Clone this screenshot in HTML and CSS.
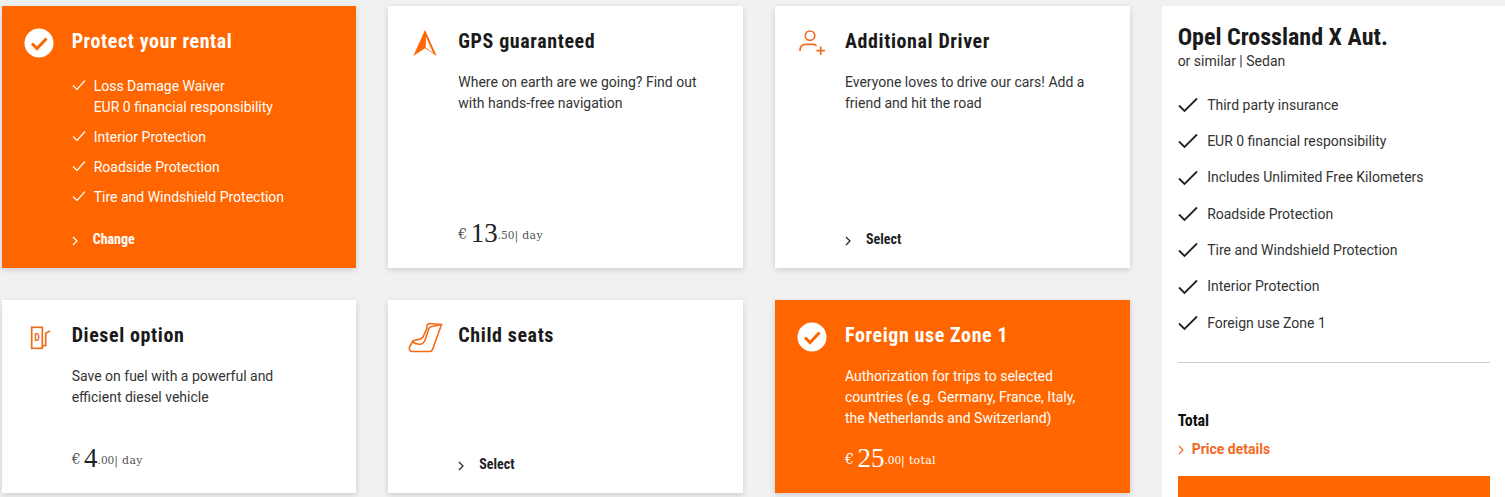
FILE: index.html
```html
<!DOCTYPE html>
<html lang="en">

<head>
    <meta charset="UTF-8">
    <meta name="viewport" content="width=device-width, initial-scale=1.0">
    <title>Extras</title>
    <link rel="stylesheet" href="styles.css">
</head>

<body>
    <div class="page">
        <!-- Protection -->
        <div class="card card-active">
            <div class="card-icon">
                <svg viewBox="0 0 40 40" width="40" height="40"><circle cx="20" cy="20" r="14.5" fill="#fff"/><path d="M13 20.5l5 5 9.5-10" fill="none" stroke="#f60" stroke-width="3"/></svg>
            </div>
            <div class="card-body">
                <h3>Protect your rental</h3>
                <ul class="card-list">
                    <li><svg class="tick" viewBox="0 0 14 12" width="14" height="12"><path d="M1 6.5l4 4L13 1.500" fill="none" stroke="#fff" stroke-width="1.200"/></svg><span>Loss Damage Waiver<br>EUR 0 financial responsibility</span></li>
                    <li><svg class="tick" viewBox="0 0 14 12" width="14" height="12"><path d="M1 6.5l4 4L13 1.500" fill="none" stroke="#fff" stroke-width="1.200"/></svg><span>Interior Protection</span></li>
                    <li><svg class="tick" viewBox="0 0 14 12" width="14" height="12"><path d="M1 6.5l4 4L13 1.500" fill="none" stroke="#fff" stroke-width="1.200"/></svg><span>Roadside Protection</span></li>
                    <li><svg class="tick" viewBox="0 0 14 12" width="14" height="12"><path d="M1 6.5l4 4L13 1.500" fill="none" stroke="#fff" stroke-width="1.200"/></svg><span>Tire and Windshield Protection</span></li>
                </ul>
                <a href="#" class="card-action"><svg class="chev" viewBox="0 0 6 10" width="6" height="10"><path d="M1 1l4 4-4 4" fill="none" stroke="currentColor" stroke-width="1.200"/></svg>Change</a>
            </div>
        </div>

        <!-- GPS -->
        <div class="card">
            <div class="card-icon">
                <svg viewBox="0 0 40 40" width="40" height="40"><path d="M20 7l11.700 26L20 25.300 8.300 33z" fill="#f60"/><path d="M20.800 13.500l7.400 16.600-7.400-5.300z" fill="#fff"/></svg>
            </div>
            <div class="card-body">
                <h3>GPS guaranteed</h3>
                <p>Where on earth are we going? Find out with hands-free navigation</p>
                <div class="price"><span class="cur">€</span> <span class="big">13</span><span class="cents">.50</span><span class="unit">| day</span></div>
            </div>
        </div>

        <!-- Driver -->
        <div class="card">
            <div class="card-icon">
                <svg viewBox="0 0 40 40" width="40" height="40" fill="none" stroke="#ee6c1f" stroke-width="1.700"><circle cx="18" cy="12.700" r="4.700"/><path d="M8 28c0-4 2-6.700 5.500-6.700h8c1.500 0 2.500.5 3 1.500"/><path d="M28.700 23.500v8.400M24.500 27.700h8.400"/></svg>
            </div>
            <div class="card-body">
                <h3>Additional Driver</h3>
                <p>Everyone loves to drive our cars! Add a friend and hit the road</p>
                <a href="#" class="card-action"><svg class="chev" viewBox="0 0 6 10" width="6" height="10"><path d="M1 1l4 4-4 4" fill="none" stroke="currentColor" stroke-width="1.200"/></svg>Select</a>
            </div>
        </div>

        <!-- Summary -->
        <aside class="summary">
            <h2>Opel Crossland X Aut.</h2>
            <div class="summary-sub">or similar | Sedan</div>
            <ul class="summary-list">
                <li><svg viewBox="0 0 20 16" width="20" height="16"><path d="M1 8.500l5.500 5.500L19 1.500" fill="none" stroke="#222" stroke-width="1.800"/></svg>Third party insurance</li>
                <li><svg viewBox="0 0 20 16" width="20" height="16"><path d="M1 8.500l5.500 5.500L19 1.500" fill="none" stroke="#222" stroke-width="1.800"/></svg>EUR 0 financial responsibility</li>
                <li><svg viewBox="0 0 20 16" width="20" height="16"><path d="M1 8.500l5.500 5.500L19 1.500" fill="none" stroke="#222" stroke-width="1.800"/></svg>Includes Unlimited Free Kilometers</li>
                <li><svg viewBox="0 0 20 16" width="20" height="16"><path d="M1 8.500l5.500 5.500L19 1.500" fill="none" stroke="#222" stroke-width="1.800"/></svg>Roadside Protection</li>
                <li><svg viewBox="0 0 20 16" width="20" height="16"><path d="M1 8.500l5.500 5.500L19 1.500" fill="none" stroke="#222" stroke-width="1.800"/></svg>Tire and Windshield Protection</li>
                <li><svg viewBox="0 0 20 16" width="20" height="16"><path d="M1 8.500l5.500 5.500L19 1.500" fill="none" stroke="#222" stroke-width="1.800"/></svg>Interior Protection</li>
                <li><svg viewBox="0 0 20 16" width="20" height="16"><path d="M1 8.500l5.500 5.500L19 1.500" fill="none" stroke="#222" stroke-width="1.800"/></svg>Foreign use Zone 1</li>
            </ul>
            <div class="summary-total">Total</div>
            <a href="#" class="summary-link"><svg viewBox="0 0 6 10" width="6" height="10"><path d="M1 1l4 4-4 4" fill="none" stroke="currentColor" stroke-width="1.200"/></svg>Price details</a>
            <div class="summary-btn"></div>
        </aside>

        <!-- Diesel -->
        <div class="card card-narrow">
            <div class="card-icon">
                <svg viewBox="0 0 40 40" width="40" height="40" fill="none" stroke="#ee6c1f" stroke-width="1.700"><rect x="12.700" y="10.300" width="10.600" height="21"/><path d="M23.300 28.700h3.400v-12.400l4.300-2.300"/><text x="18" y="23.500" class="fuel-letter">D</text></svg>
            </div>
            <div class="card-body">
                <h3>Diesel option</h3>
                <p>Save on fuel with a powerful and efficient diesel vehicle</p>
                <div class="price"><span class="cur">€</span> <span class="big">4</span><span class="cents">.00</span><span class="unit">| day</span></div>
            </div>
        </div>

        <!-- Child seats -->
        <div class="card">
            <div class="card-icon">
                <svg viewBox="0 0 40 40" width="40" height="40" fill="none" stroke="#f36b16" stroke-width="1.600"><path d="M36.500 7.500L24.500 6.500c-2 0-3 2-2.500 4.500L18 20c-1 1.500-2 2-4 2.500-3 .5-5.500.8-6.500 2L4.500 30c-.5 2 0 4.500 2 4.500H25c1.500 0 2-.5 2.500-2z"/><path d="M7.500 25c2 1.500 4 2.500 8 2.200 2.500-.2 3.500-1.500 4.500-4l4-12c.5-1 1.500-1.500 3-1.700l9.500-2"/></svg>
            </div>
            <div class="card-body">
                <h3>Child seats</h3>
                <a href="#" class="card-action"><svg class="chev" viewBox="0 0 6 10" width="6" height="10"><path d="M1 1l4 4-4 4" fill="none" stroke="currentColor" stroke-width="1.200"/></svg>Select</a>
            </div>
        </div>

        <!-- Foreign use -->
        <div class="card card-active card-narrow">
            <div class="card-icon">
                <svg viewBox="0 0 40 40" width="40" height="40"><circle cx="20" cy="20" r="14.5" fill="#fff"/><path d="M13 20.500l5 5 9.500-10" fill="none" stroke="#f60" stroke-width="3"/></svg>
            </div>
            <div class="card-body">
                <h3>Foreign use Zone 1</h3>
                <p>Authorization for trips to selected countries (e.g. Germany, France, Italy, the Netherlands and Switzerland)</p>
                <div class="price"><span class="cur">€</span> <span class="big">25</span><span class="cents">.00</span><span class="unit">| total</span></div>
            </div>
        </div>
    </div>
</body>

</html>
```

FILE: styles.css
```css
* {
    box-sizing: border-box;
    margin: 0;
    padding: 0;
}

html,
body {
    height: 497px;
    overflow: hidden;
}

body {
    background-color: #f1f1f1;
    font-family: Roboto, Arial, sans-serif;
    font-size: 14px;
    line-height: 21px;
    color: #333;
}

.page {
    display: grid;
    grid-template-columns: 354.67px 354.67px 354.67px 344px;
    grid-template-rows: 262px 193px;
    gap: 32px;
    padding: 6px 0 0 1.67px;
    width: 1540px;
}

/* Cards */

.card {
    display: flex;
    background: #fff;
    box-shadow: 0 2px 6px rgba(0, 0, 0, 0.15);
}

.card-active {
    background: #f60;
    color: #fff;
}

.card-icon {
    flex: 0 0 70px;
    padding: 17px 0 0 17px;
}

.card-icon svg {
    display: block;
}

.fuel-letter {
    font-family: "Roboto Condensed", Roboto, sans-serif;
    font-size: 10px;
    font-weight: 700;
    text-anchor: middle;
    fill: #ee6c1f;
    stroke: none;
}

.card-body {
    flex: 1;
    display: flex;
    flex-direction: column;
    padding: 20px 24px 0 0;
    min-width: 0;
}

.card-narrow p {
    max-width: 250px;
}

.card h3 {
    font-family: "Roboto Condensed", Roboto, sans-serif;
    font-stretch: 75%;
    font-size: 20px;
    line-height: 30px;
    font-weight: 700;
    letter-spacing: 0.6px;
    color: #1a1a1a;
    margin-bottom: 16px;
}

.card-active h3 {
    color: #fff;
}

.card-list {
    list-style: none;
    margin-top: 4px;
}

.card-list li {
    display: flex;
    margin-bottom: 9px;
}

.card-list .tick {
    flex: 0 0 14px;
    margin: 3px 8px 0 0;
}

.card-action {
    margin-top: auto;
    margin-bottom: 18px;
    display: flex;
    align-items: center;
    font-family: "Roboto Condensed", Roboto, sans-serif;
    font-stretch: 75%;
    font-size: 14px;
    font-weight: 700;
    color: #222;
    text-decoration: none;
}

.card-active .card-action {
    color: #fff;
}

.card-action .chev {
    margin: 2px 15px 0 0;
}

.price {
    margin-top: auto;
    margin-bottom: 20px;
    font-family: "DejaVu Serif", serif;
    font-size: 11px;
    line-height: 24px;
    color: #555;
    white-space: nowrap;
}

.card-active .price,
.card-active .price .big {
    color: #fff;
}

.price .cur {
    font-size: 14px;
}

.price .big {
    font-family: "Liberation Serif", serif;
    font-size: 27px;
    line-height: 1;
    vertical-align: -3px;
    color: #222;
}

.price .cents {
    font-size: 10.5px;
}

.price .unit {
    letter-spacing: 0.3px;
}

/* Summary */

.summary {
    grid-row: 1 / span 2;
    grid-column: 4;
    background: #fff;
    padding: 16px 16px 0 16px;
    height: 491px;
    overflow: hidden;
}

.summary h2 {
    font-family: "Roboto Condensed", Roboto, sans-serif;
    font-stretch: 75%;
    font-size: 24px;
    line-height: 30px;
    font-weight: 700;
    color: #1a1a1a;
}

.summary-sub {
    line-height: 18px;
}

.summary-list {
    list-style: none;
    margin-top: 17px;
    padding-bottom: 21px;
    border-bottom: 1px solid #ccc;
}

.summary-list li {
    display: flex;
    align-items: center;
    gap: 9.5px;
    height: 36.33px;
    color: #333;
}

.summary-total {
    margin-top: 47px;
    font-family: "Roboto Condensed", Roboto, sans-serif;
    font-stretch: 75%;
    font-size: 16px;
    font-weight: 700;
    color: #111;
}

.summary-link {
    display: flex;
    align-items: center;
    gap: 8px;
    margin-top: 8px;
    font-weight: 700;
    color: #f26a21;
    text-decoration: none;
}

.summary-btn {
    margin-top: 16px;
    height: 60px;
    background: #f60;
}
```
